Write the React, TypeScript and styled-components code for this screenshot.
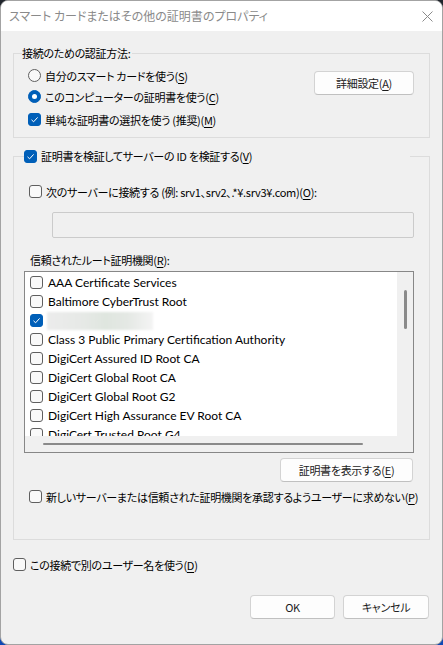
import React from "react";
import styled, { createGlobalStyle } from "styled-components";

const GlobalStyle = createGlobalStyle`
  html, body {
    margin: 0;
    padding: 0;
  }
  body {
    width: 443px;
    height: 645px;
    overflow: hidden;
    background: linear-gradient(180deg, #20252c 0%, #1d3a78 70%, #0f49b5 100%);
    font-family: "Noto Sans CJK JP", "Noto Sans", sans-serif;
    font-size: 11px;
    letter-spacing: -0.3px;
    font-feature-settings: "palt";
    color: #000;
  }
`;

const Window = styled.div`
  box-sizing: border-box;
  width: 443px;
  height: 645px;
  border: 1px solid #a3a3a3;
  border-radius: 8px;
  overflow: hidden;
  background: #f0f0f0;
  display: flex;
  flex-direction: column;
`;

const TitleBar = styled.div`
  flex: none;
  height: 30px;
  background: #fff;
  display: flex;
  align-items: center;
  justify-content: space-between;
  padding-left: 8px;
  color: #8a8a8a;
  font-size: 12px;
  letter-spacing: 0;
  line-height: 16px;
`;

const CloseBox = styled.div`
  width: 30px;
  height: 30px;
  display: flex;
  align-items: center;
  justify-content: center;
`;

const Body = styled.div`
  flex: 1;
  padding: 14px 12px 0 12px;
  display: flex;
  flex-direction: column;
`;

const Group = styled.fieldset<{ $gapTop?: number }>`
  margin: ${(p) => p.$gapTop ?? 0}px 0 0 0;
  padding: 0;
  min-width: 0;
  border: 1px solid #dcdcdc;
`;

const Legend = styled.legend<{ $indent: number; $width?: number }>`
  margin-left: ${(p) => p.$indent}px;
  padding: 0 2px 0 0;
  height: 16px;
  line-height: 16px;
  display: flex;
  align-items: center;
  ${(p) => (p.$width ? `width: ${p.$width}px; box-sizing: border-box;` : "")}
`;

const AuthContent = styled.div`
  display: flex;
  justify-content: space-between;
  align-items: flex-start;
  padding: 4px 15px 7px 14px;
`;

const OptionColumn = styled.div`
  display: flex;
  flex-direction: column;
`;

const Option = styled.label<{ $top?: number; $left?: number; $h?: number }>`
  display: flex;
  align-items: center;
  height: ${(p) => p.$h ?? 21}px;
  line-height: 16px;
  margin-top: ${(p) => p.$top ?? 0}px;
  margin-left: ${(p) => p.$left ?? 0}px;
  white-space: nowrap;
`;

const Caption = styled.span<{ $gap?: number }>`
  margin-left: ${(p) => p.$gap ?? 4}px;
`;

const Box = styled.span<{ $checked?: boolean }>`
  flex: none;
  box-sizing: border-box;
  width: 13px;
  height: 13px;
  border-radius: 3px;
  border: 1px solid ${(p) => (p.$checked ? "#005fb8" : "#5f5f5f")};
  background: ${(p) => (p.$checked ? "#005fb8" : "#f9f9f9")};
  display: flex;
  align-items: center;
  justify-content: center;
`;

const Radio = styled.span<{ $checked?: boolean }>`
  flex: none;
  box-sizing: border-box;
  width: 13px;
  height: 13px;
  border-radius: 50%;
  border: 1px solid ${(p) => (p.$checked ? "#005fb8" : "#5f5f5f")};
  background: ${(p) => (p.$checked ? "#005fb8" : "#f9f9f9")};
  display: flex;
  align-items: center;
  justify-content: center;
  &::after {
    content: "";
    display: ${(p) => (p.$checked ? "block" : "none")};
    width: 5px;
    height: 5px;
    border-radius: 50%;
    background: #fff;
  }
`;

const Button = styled.button<{ $width: number; $top?: number }>`
  box-sizing: border-box;
  width: ${(p) => p.$width}px;
  height: 24px;
  margin-top: ${(p) => p.$top ?? 0}px;
  padding: 0;
  background: #fdfdfd;
  border: 1px solid #d3d3d3;
  border-bottom-color: #c0c0c0;
  border-radius: 4px;
  font-family: inherit;
  font-size: 11px;
  letter-spacing: -0.3px;
  font-feature-settings: "palt";
  color: #1b1b1b;
  line-height: 16px;
`;

const VerifyContent = styled.div`
  display: flex;
  flex-direction: column;
  padding: 17px 15px 32px 10px;
`;

const ServerInput = styled.div`
  box-sizing: border-box;
  height: 26px;
  margin: 10px 0 0 28px;
  border: 1px solid #cbcbcb;
  border-radius: 2px;
  background: #f0f0f0;
`;

const FieldLabel = styled.div`
  margin: 14px 0 0 6px;
  line-height: 16px;
`;

const ListBox = styled.div`
  box-sizing: border-box;
  height: 182px;
  margin-top: 3px;
  border: 1px solid #878787;
  display: grid;
  grid-template-columns: 1fr 16px;
  grid-template-rows: 1fr 16px;
  background: #f0f0f0;
`;

const ListItems = styled.div`
  background: #fff;
  overflow: hidden;
  padding-top: 1px;
  font-family: "Lato", "Noto Sans CJK JP", sans-serif;
  font-size: 12px;
  letter-spacing: 0;
`;

const ListRow = styled.div`
  display: flex;
  align-items: center;
  height: 19px;
  padding-left: 5px;
  line-height: 16px;
  white-space: nowrap;
`;

const Redacted = styled.span`
  display: block;
  width: 106px;
  height: 18px;
  margin-left: 4px;
  background: linear-gradient(
    90deg,
    #ececec 0%,
    #e6e9e6 35%,
    #dfe6df 55%,
    #e4e8e4 75%,
    #f4f4f4 100%
  );
  filter: blur(1.2px);
`;

const VTrack = styled.div`
  padding: 18px 0 0 7px;
`;

const VThumb = styled.div`
  width: 3px;
  height: 39px;
  border-radius: 2px;
  background: #8a8a8a;
`;

const HTrack = styled.div`
  padding: 7px 0 0 18px;
`;

const HThumb = styled.div`
  width: 320px;
  height: 2px;
  border-radius: 1px;
  background: #8a8a8a;
`;

const RightRow = styled.div<{ $top: number; $right?: number }>`
  display: flex;
  justify-content: flex-end;
  gap: 8px;
  margin-top: ${(p) => p.$top}px;
  margin-right: ${(p) => p.$right ?? 0}px;
`;

const Key = styled.u`
  text-underline-offset: 2px;
`;

const Check = ({ checked }: { checked?: boolean }) => (
  <Box $checked={checked}>
    {checked && (
      <svg width="9" height="9" viewBox="0 0 9 9">
        <path d="M1.5 4.8 L3.6 6.8 L7.6 2.4" fill="none" stroke="#fff" strokeWidth="1" />
      </svg>
    )}
  </Box>
);

const roots = [
  "AAA Certificate Services",
  "Baltimore CyberTrust Root",
  "",
  "Class 3 Public Primary Certification Authority",
  "DigiCert Assured ID Root CA",
  "DigiCert Global Root CA",
  "DigiCert Global Root G2",
  "DigiCert High Assurance EV Root CA",
  "DigiCert Trusted Root G4",
];

export default function App() {
  return (
    <>
      <GlobalStyle />
      <Window>
        <TitleBar>
          <span>スマート カードまたはその他の証明書のプロパティ</span>
          <CloseBox>
            <svg width="11" height="11" viewBox="0 0 11 11">
              <path d="M0.5 0.5 L10.5 10.5 M10.5 0.5 L0.5 10.5" stroke="#8a8a8a" strokeWidth="1" />
            </svg>
          </CloseBox>
        </TitleBar>
        <Body>
          <Group>
            <Legend $indent={8}>接続のための認証方法:</Legend>
            <AuthContent>
              <OptionColumn>
                <Option>
                  <Radio />
                  <Caption>
                    自分のスマート カードを使う(<Key>S</Key>)
                  </Caption>
                </Option>
                <Option>
                  <Radio $checked />
                  <Caption>
                    このコンピューターの証明書を使う(<Key>C</Key>)
                  </Caption>
                </Option>
                <Option $top={2}>
                  <Check checked />
                  <Caption>
                    単純な証明書の選択を使う (推奨)(<Key>M</Key>)
                  </Caption>
                </Option>
              </OptionColumn>
              <Button $width={100} $top={6}>
                詳細設定(<Key>A</Key>)
              </Button>
            </AuthContent>
          </Group>

          <Group $gapTop={10}>
            <Legend $indent={10} $width={386}>
              <Option $h={16}>
                <Check checked />
                <Caption>
                  証明書を検証してサーバーの ID を検証する(<Key>V</Key>)
                </Caption>
              </Option>
            </Legend>
            <VerifyContent>
              <Option $left={5}>
                <Check />
                <Caption>
                  次のサーバーに接続する (例: srv1、srv2、.*¥.srv3¥.com)(<Key>O</Key>):
                </Caption>
              </Option>
              <ServerInput />
              <FieldLabel>
                信頼されたルート証明機関(<Key>R</Key>):
              </FieldLabel>
              <ListBox>
                <ListItems>
                  {roots.map((name, i) => (
                    <ListRow key={i}>
                      <Check checked={i === 2} />
                      {name ? <Caption $gap={5}>{name}</Caption> : <Redacted />}
                    </ListRow>
                  ))}
                </ListItems>
                <VTrack>
                  <VThumb />
                </VTrack>
                <HTrack>
                  <HThumb />
                </HTrack>
                <div />
              </ListBox>
              <RightRow $top={5} $right={1}>
                <Button $width={133}>
                  証明書を表示する(<Key>E</Key>)
                </Button>
              </RightRow>
              <Option $top={4} $left={5}>
                <Check />
                <Caption>
                  新しいサーバーまたは信頼された証明機関を承認するようユーザーに求めない(<Key>P</Key>)
                </Caption>
              </Option>
            </VerifyContent>
          </Group>

          <Option $top={14}>
            <Check />
            <Caption>
              この接続で別のユーザー名を使う(<Key>D</Key>)
            </Caption>
          </Option>
          <RightRow $top={20} $right={1}>
            <Button $width={85}>OK</Button>
            <Button $width={86}>キャンセル</Button>
          </RightRow>
        </Body>
      </Window>
    </>
  );
}
